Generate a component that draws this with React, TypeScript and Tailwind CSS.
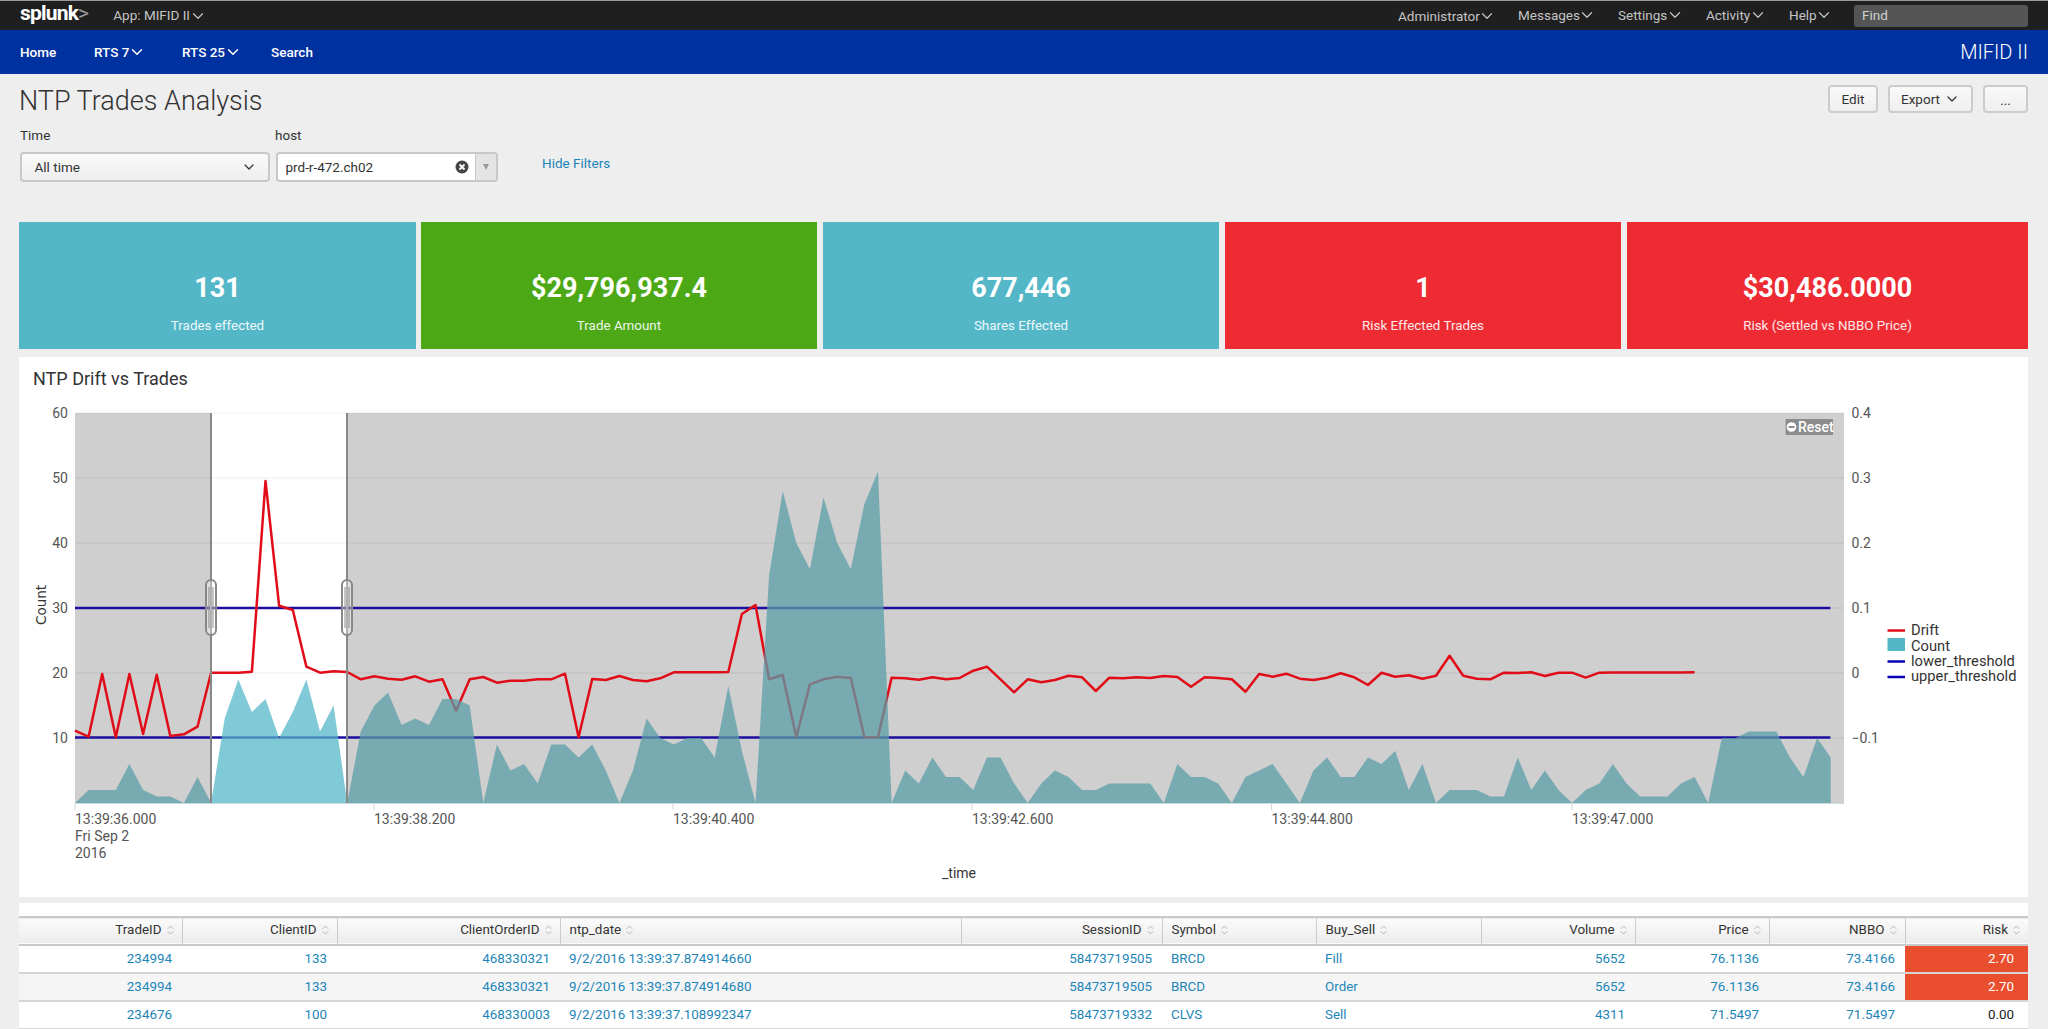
import { ChevronDown } from "lucide-react"

const counts = [
  0, 2, 2, 2, 6, 2, 1, 1, 0, 4,
  0, 13, 19, 14, 16, 10, 14, 19, 11, 15,
  0, 11, 15, 17, 12, 13, 12, 16, 16, 15,
  0, 9, 5, 6, 3, 9, 9, 7, 9, 5,
  0, 5, 13, 10, 9, 10, 10, 7, 18, 8,
  0, 35, 48, 40, 36, 47, 40, 36, 46, 51,
  0, 5, 3, 7, 4, 4, 2, 7, 7, 3,
  0, 3, 5, 4, 2, 2, 3, 3, 3, 3,
  0, 6, 4, 4, 3, 0, 4, 5, 6, 3,
  0, 5, 7, 4, 4, 7, 6, 8, 2, 6,
  0, 2, 2, 2, 1, 1, 7, 2, 5, 2,
  0, 2, 3, 6, 3, 1, 1, 1, 3, 4,
  0, 10, 10, 11, 11, 11, 7, 4, 10, 7,
]

// drift series, already in page pixels
const drift = [
  730.7, 736.7, 674, 737.3, 674, 734, 674.7, 736, 734.3, 726.7,
  672.7, 672.7, 672.7, 671.7, 481, 605.7, 610, 666.7, 672.7, 671.3,
  672, 679.3, 676.3, 678.7, 679.7, 676.3, 681.7, 679.3, 710.7, 679.3,
  677, 682.7, 680.7, 680.7, 679.3, 679.3, 673.7, 737.3, 679, 680,
  676, 680, 681.3, 678.3, 672.3, 672.3, 672.3, 672.3, 672, 614,
  605, 679.3, 675, 737.3, 684.3, 679.3, 676.7, 678, 737.3, 737.3,
  677.7, 678.3, 679.7, 677.3, 679.3, 678, 670.7, 666.7, 679.3, 692.3,
  679.3, 682.3, 680, 675.7, 677.3, 691, 677.7, 678.3, 677.3, 678,
  676, 677, 686.7, 677.3, 678, 679.3, 691.7, 674, 676.7, 673.7,
  678.7, 680, 677.7, 673.3, 677.3, 685, 672.7, 676.7, 675.3, 678.7,
  675.7, 655.7, 675.7, 678.7, 679.3, 672.7, 673, 672.3, 676, 672.7,
  672.7, 677.7, 672.7, 672.6, 672.5, 672.5, 672.5, 672.4, 672.4, 672.3,
]

const px = (i: number) => 75 + i * 13.61
const areaPoints =
  "75,803 " + counts.map((c, i) => `${px(i).toFixed(1)},${803 - c * 6.5}`).join(" ") + ` ${px(129).toFixed(1)},803`
const driftPoints = drift.map((y, i) => `${px(i).toFixed(1)},${y}`).join(" ")

const leftAxis = [
  ["60", 413],
  ["50", 478],
  ["40", 543],
  ["30", 608],
  ["20", 673],
  ["10", 738],
] as const
const rightAxis = [
  ["0.4", 413],
  ["0.3", 478],
  ["0.2", 543],
  ["0.1", 608],
  ["0", 673],
  ["−0.1", 738],
] as const
const ticks = [
  ["13:39:36.000", 75],
  ["13:39:38.200", 374],
  ["13:39:40.400", 673],
  ["13:39:42.600", 972],
  ["13:39:44.800", 1271.5],
  ["13:39:47.000", 1572],
] as const

const columns = [
  { name: "TradeID", width: "w-[163px]", right: true },
  { name: "ClientID", width: "w-[155px]", right: true },
  { name: "ClientOrderID", width: "w-[223px]", right: true },
  { name: "ntp_date", width: "w-[401px]", right: false },
  { name: "SessionID", width: "w-[201px]", right: true },
  { name: "Symbol", width: "w-[154px]", right: false },
  { name: "Buy_Sell", width: "w-[165px]", right: false },
  { name: "Volume", width: "w-[154px]", right: true },
  { name: "Price", width: "w-[134px]", right: true },
  { name: "NBBO", width: "w-[136px]", right: true },
  { name: "Risk", width: "w-[123px]", right: true },
]

const rows = [
  ["234994", "133", "468330321", "9/2/2016 13:39:37.874914660", "58473719505", "BRCD", "Fill", "5652", "76.1136", "73.4166", "2.70"],
  ["234994", "133", "468330321", "9/2/2016 13:39:37.874914680", "58473719505", "BRCD", "Order", "5652", "76.1136", "73.4166", "2.70"],
  ["234676", "100", "468330003", "9/2/2016 13:39:37.108992347", "58473719332", "CLVS", "Sell", "4311", "71.5497", "71.5497", "0.00"],
]

const tiles = [
  { value: "131", label: "Trades effected", box: "w-[397px] bg-[#53b7c8]" },
  { value: "$29,796,937.4", label: "Trade Amount", box: "w-[396px] ml-[5px] bg-[#4da816]" },
  { value: "677,446", label: "Shares Effected", box: "w-[396px] ml-[6px] bg-[#53b7c8]" },
  { value: "1", label: "Risk Effected Trades", box: "w-[396px] ml-[6px] bg-[#ee2a33]" },
  { value: "$30,486.0000", label: "Risk (Settled vs NBBO Price)", box: "w-[401px] ml-[6px] bg-[#ee2a33]" },
]

function SortIcon() {
  return (
    <svg width="7" height="12" viewBox="0 0 8 12" className="shrink-0" fill="none" stroke="#aaaaaa" strokeWidth="1">
      <path d="M1 4.5 L4 1.5 L7 4.5" />
      <path d="M1 7.5 L4 10.5 L7 7.5" />
    </svg>
  )
}

function TopMenu({ label }: { label: string }) {
  return (
    <span className="flex items-center whitespace-nowrap">
      {label}
      <ChevronDown size={18} strokeWidth={1.6} className="-ml-[1.5px]" />
    </span>
  )
}

function Chart() {
  return (
    <svg viewBox="19 357 2009 540" width="2009" height="540" className="absolute left-0 top-0">
      <defs>
        <clipPath id="selected">
          <rect x="211" y="413" width="136" height="390" />
        </clipPath>
        <clipPath id="masked">
          <rect x="75" y="413" width="136" height="390" />
          <rect x="347" y="413" width="1497" height="390" />
        </clipPath>
      </defs>

      <rect x="75" y="413" width="136" height="390" fill="#cfcfcf" />
      <rect x="347" y="413" width="1497" height="390" fill="#cfcfcf" />
      <line x1="75" x2="1844" y1="413" y2="413" stroke="#000" strokeOpacity="0.06" />
      {[478, 543, 608, 673, 738].map((y) => (
        <line key={y} x1="75" x2="1844" y1={y} y2={y} stroke="#000" strokeOpacity="0.05" strokeWidth="1.5" />
      ))}

      <line x1="75" x2="1830.4" y1="608" y2="608" stroke="#1c0e9e" strokeWidth="2.5" />
      <line x1="75" x2="1830.4" y1="737.5" y2="737.5" stroke="#1c0e9e" strokeWidth="2.5" />
      <polyline points={driftPoints} fill="none" stroke="#e00c18" strokeWidth="2.5" strokeLinejoin="round" />

      <polygon points={areaPoints} fill="#55b7c8" fillOpacity="0.75" clipPath="url(#selected)" />
      <polygon points={areaPoints} fill="#5b9ea8" fillOpacity="0.75" clipPath="url(#masked)" />

      <line x1="75" x2="1844" y1="803.5" y2="803.5" stroke="#c6dde2" />
      {ticks.map(([label, x]) => (
        <g key={label}>
          <line x1={x} x2={x} y1="804" y2="810" stroke="#d5d5d5" />
          <text x={x} y="824" fontSize="14" fill="#555">
            {label}
          </text>
        </g>
      ))}
      <text x="75" y="841" fontSize="14" fill="#555">
        Fri Sep 2
      </text>
      <text x="75" y="858" fontSize="14" fill="#555">
        2016
      </text>
      <text x="959" y="878" fontSize="14" fill="#333" textAnchor="middle">
        _time
      </text>

      {leftAxis.map(([label, y]) => (
        <text key={label} x="68" y={y + 5} fontSize="14" fill="#555" textAnchor="end">
          {label}
        </text>
      ))}
      {rightAxis.map(([label, y]) => (
        <text key={label} x="1851.5" y={y + 5} fontSize="14" fill="#555">
          {label}
        </text>
      ))}
      <text
        x="41"
        y="605"
        fontSize="13.5"
        fontFamily="DejaVu Sans"
        fill="#333"
        textAnchor="middle"
        transform="rotate(-90 41 605)"
        dominantBaseline="central"
      >
        Count
      </text>

      {[211, 347].map((x) => (
        <g key={x}>
          <line x1={x} x2={x} y1="413" y2="803" stroke="#888888" strokeWidth="2" />
          <rect x={x - 5} y="580" width="10" height="55" rx="5" fill="#ffffff" fillOpacity="0.35" stroke="#888888" strokeWidth="2" />
          <line x1={x - 2} x2={x - 2} y1="587" y2="628" stroke="#888888" />
          <line x1={x + 2} x2={x + 2} y1="587" y2="628" stroke="#888888" />
        </g>
      ))}

      <rect x="1785.6" y="419" width="47.4" height="16" fill="#8c8c8c" />
      <circle cx="1791.5" cy="427" r="4.8" fill="#ffffff" />
      <rect x="1788.5" y="426" width="6" height="2" fill="#8c8c8c" />
      <text x="1798" y="432" fontSize="14" fontWeight="500" fill="#ffffff">
        Reset
      </text>

      <line x1="1887.5" x2="1905" y1="630.5" y2="630.5" stroke="#e00c18" strokeWidth="2.5" />
      <rect x="1887.5" y="638" width="17.5" height="13" fill="#53b7c8" />
      <line x1="1887.5" x2="1905" y1="661.5" y2="661.5" stroke="#0a00b4" strokeWidth="2.5" />
      <line x1="1887.5" x2="1905" y1="677" y2="677" stroke="#0a00b4" strokeWidth="2.5" />
      {[
        ["Drift", 635],
        ["Count", 650.5],
        ["lower_threshold", 665.5],
        ["upper_threshold", 681],
      ].map(([label, y]) => (
        <text key={label} x="1911" y={y} fontSize="14.7" fill="#333">
          {label}
        </text>
      ))}
    </svg>
  )
}

export default function App() {
  return (
    <div className="w-[2048px] h-[1029px] overflow-hidden bg-[#eeeeee] [font-family:Roboto,sans-serif] text-[#333333]">
      {/* Top bar */}
      <div className="h-[30px] bg-[#1f1f1f] border-t-[1px] border-[#9a9a9a] flex items-center justify-between pl-[20px] pr-[20px] text-[13.5px] text-[#c4c4c4]">
        <div className="flex items-center">
          <span className="text-[21px] font-bold leading-none tracking-[-0.8px] text-white pb-[4px]">
            splunk<span className="font-normal text-[#9a9a9a]">&gt;</span>
          </span>
          <span className="ml-[25px]">
            <TopMenu label="App: MIFID II" />
          </span>
        </div>
        <div className="flex items-center">
          <div className="absolute left-[1398px] top-[6px]">
            <TopMenu label="Administrator" />
          </div>
          <div className="absolute left-[1518px] top-[5px]">
            <TopMenu label="Messages" />
          </div>
          <div className="absolute left-[1618px] top-[5px]">
            <TopMenu label="Settings" />
          </div>
          <div className="absolute left-[1706px] top-[5px]">
            <TopMenu label="Activity" />
          </div>
          <div className="absolute left-[1789px] top-[5px]">
            <TopMenu label="Help" />
          </div>
          <div className="w-[174px] h-[22px] rounded-[3px] bg-[#555555] pl-[8px] flex items-center text-[#d0d0d0]">Find</div>
        </div>
      </div>

      {/* App nav */}
      <div className="h-[44px] bg-[#0031a0] flex items-center justify-between pl-[20px] pr-[20px] text-white">
        <div className="relative flex items-center text-[13.5px] font-medium h-full">
          <span className="absolute left-0">Home</span>
          <span className="absolute left-[74px] flex items-center whitespace-nowrap">
            RTS 7<ChevronDown size={18} strokeWidth={2} className="-ml-[1px]" />
          </span>
          <span className="absolute left-[162px] flex items-center whitespace-nowrap">
            RTS 25<ChevronDown size={18} strokeWidth={2} className="-ml-[1px]" />
          </span>
          <span className="absolute left-[251px]">Search</span>
        </div>
        <span className="text-[20px] font-light">MIFID II</span>
      </div>

      <div className="pl-[19px] pr-[20px]">
        {/* Title row */}
        <div className="mt-[11px] h-[28px] flex items-center justify-between">
          <h1 className="pt-[3px] text-[27px] font-light leading-[28px]">NTP Trades Analysis</h1>
          <div className="flex gap-[10px] text-[13.5px]">
            <button className="w-[50px] h-[28px] rounded-[4px] border-[2px] border-[#cccccc] bg-linear-to-b from-[#fafafa] to-[#eeeeee]">Edit</button>
            <button className="w-[85px] h-[28px] rounded-[4px] border-[2px] border-[#cccccc] bg-linear-to-b from-[#fafafa] to-[#eeeeee] flex items-center justify-center gap-[4px]">
              Export <ChevronDown size={16} strokeWidth={1.8} />
            </button>
            <button className="w-[45px] h-[28px] rounded-[4px] border-[2px] border-[#cccccc] bg-linear-to-b from-[#fafafa] to-[#eeeeee] pt-[2px]">...</button>
          </div>
        </div>

        {/* Filters */}
        <div className="relative mt-[15px] h-[54px] text-[13.5px]">
          <div className="absolute left-[1px] top-[-1px] leading-[16px]">Time</div>
          <div className="absolute left-[256px] top-[-1px] leading-[16px]">host</div>
          <div className="absolute left-[0.5px] top-[24px] w-[250px] h-[30px] rounded-[4px] border-[2px] border-[#c8c8c8] bg-linear-to-b from-[#fafafa] to-[#eeeeee] flex items-center justify-between pl-[13px] pr-[11px]">
            All time
            <ChevronDown size={16} strokeWidth={1.8} />
          </div>
          <div className="absolute left-[256.5px] top-[24px] w-[222px] h-[30px] rounded-[4px] border-[2px] border-[#c8c8c8] bg-white flex items-center overflow-hidden">
            <span className="pl-[8px] flex-1">prd-r-472.ch02</span>
            <svg width="14" height="14" viewBox="0 0 14 14" className="mr-[6px]">
              <circle cx="7" cy="7" r="6.5" fill="#444444" />
              <path d="M4.5 4.5 L9.5 9.5 M9.5 4.5 L4.5 9.5" stroke="#ffffff" strokeWidth="1.8" />
            </svg>
            <div className="w-[21px] h-full bg-[#e4e4e4] border-l-[1px] border-[#c8c8c8] flex items-center justify-center">
              <div className="w-0 h-0 border-l-[3.5px] border-r-[3.5px] border-t-[6px] border-l-transparent border-r-transparent border-t-[#999999]" />
            </div>
          </div>
          <a className="absolute left-[523px] top-[27px] leading-[16px] text-[#1d85b8]">Hide Filters</a>
        </div>

        {/* Single value tiles */}
        <div className="mt-[40px] flex h-[127px]">
          {tiles.map((t) => (
            <div key={t.label} className={`${t.box} text-white text-center`}>
              <div className="mt-[48px] text-[27px] font-bold leading-[36px]">{t.value}</div>
              <div className="mt-[11px] text-[13.4px] leading-[18px] text-white/90">{t.label}</div>
            </div>
          ))}
        </div>

        {/* Chart panel */}
        <div className="relative mt-[8px] h-[540px] bg-white">
          <div className="relative z-10 pl-[14px] pt-[12px] text-[18px] leading-[20px]">NTP Drift vs Trades</div>
          <Chart />
        </div>

        {/* Results table */}
        <div className="mt-[6px] bg-white pt-[13px]">
          <table className="table-fixed w-[2009px] border-collapse text-[13.4px]">
            <colgroup>
              {columns.map((c) => (
                <col key={c.name} className={c.width} />
              ))}
            </colgroup>
            <thead>
              <tr className="h-[28px] bg-linear-to-b from-[#fbfbfb] to-[#ececec] border-t-[2px] border-b-[2px] border-[#c9c9c9]">
                {columns.map((c, i) => (
                  <th key={c.name} className={`font-normal p-0 ${i < columns.length - 1 ? "border-r-[1px] border-[#cccccc]" : ""}`}>
                    <span className={`flex items-center gap-[5px] pb-[1px] ${c.right ? "justify-end pr-[8px]" : "pl-[9px]"}`}>
                      {c.name}
                      <SortIcon />
                    </span>
                  </th>
                ))}
              </tr>
            </thead>
            <tbody>
              {rows.map((row, r) => (
                <tr key={r} className={`h-[28px] border-b-[2px] border-[#d5d5d5] ${r === 1 ? "bg-[#f5f5f5]" : "bg-white"}`}>
                  {row.map((cell, i) => {
                    const risk = i === row.length - 1
                    const hot = risk && cell !== "0.00"
                    return (
                      <td
                        key={i}
                        className={`p-0 ${columns[i].right ? "text-right pr-[10px]" : "pl-[9px]"} ${risk ? "pr-[14px]" : ""} ${
                          hot ? "bg-[#e94e2e] text-white" : risk ? "text-[#222222]" : "text-[#1d85b8]"
                        }`}
                      >
                        {cell}
                      </td>
                    )
                  })}
                </tr>
              ))}
            </tbody>
          </table>
        </div>
      </div>
    </div>
  )
}
